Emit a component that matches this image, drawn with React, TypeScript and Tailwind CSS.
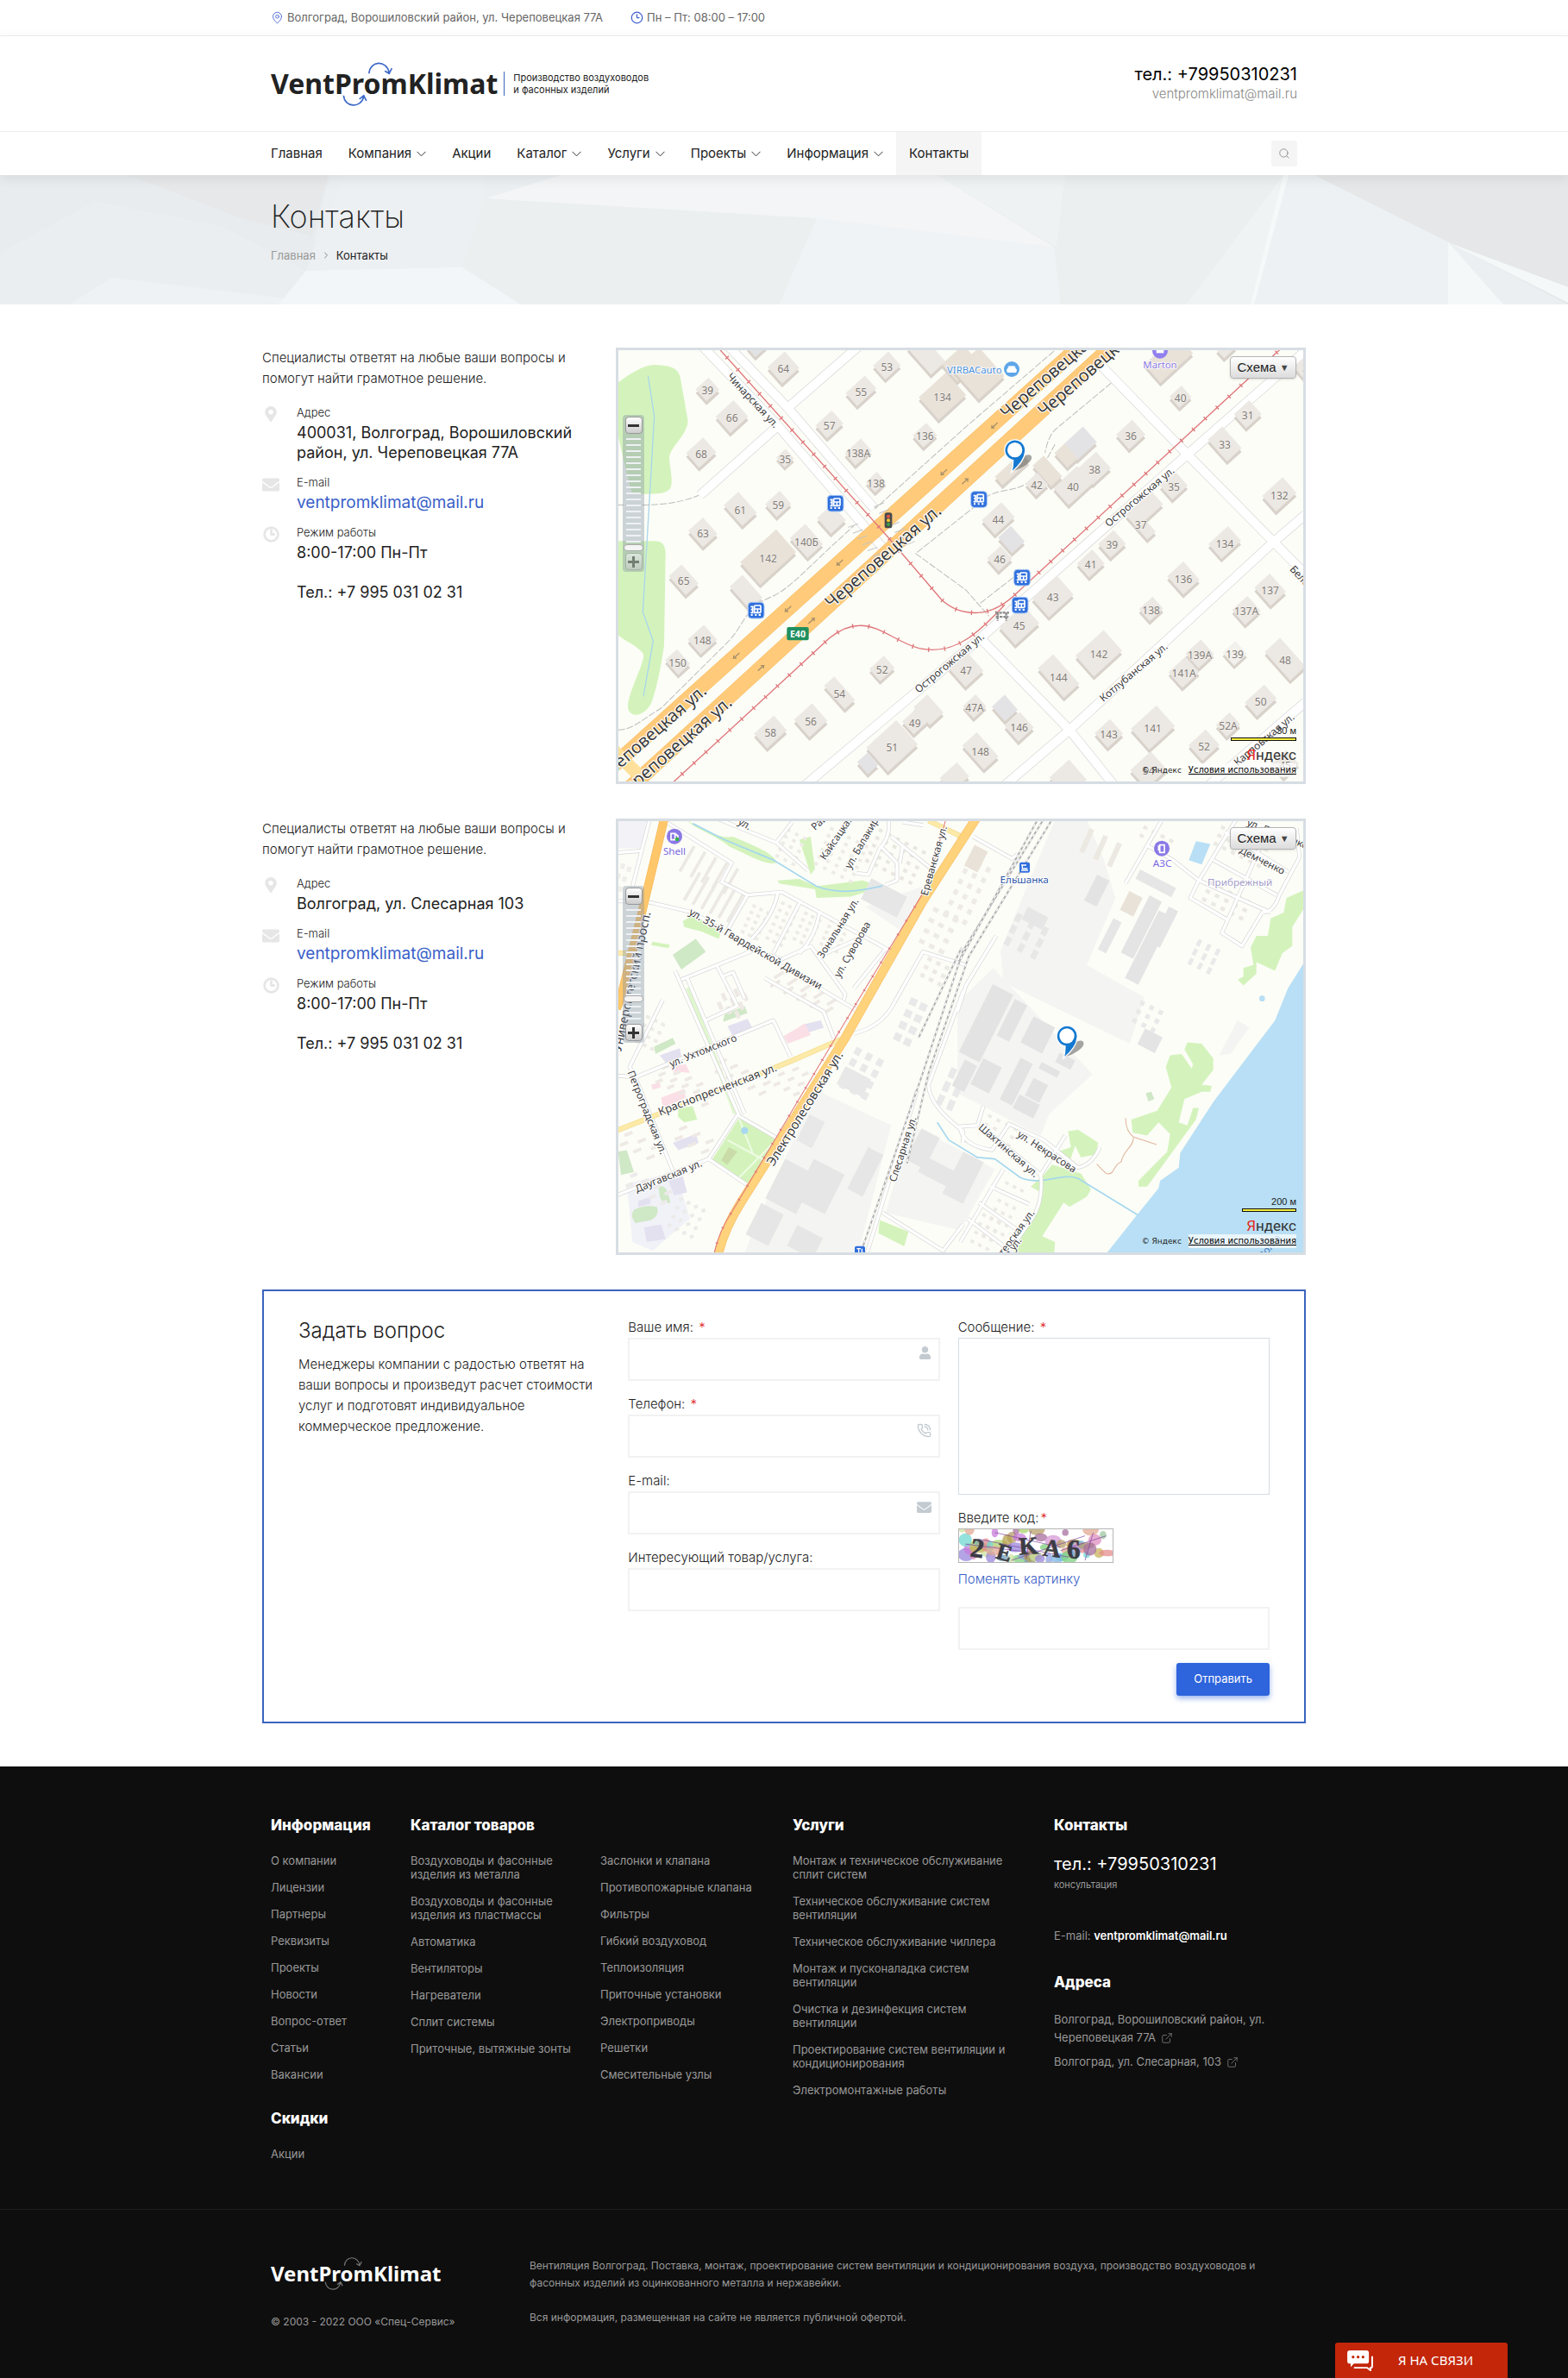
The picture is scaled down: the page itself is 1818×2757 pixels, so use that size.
import type { ReactNode } from "react";
import { FaEnvelope, FaMapMarkerAlt, FaUser } from "react-icons/fa";
import { ChevronRight, Clock3, ExternalLink, MapPin, PhoneCall, Search } from "lucide-react";

const navItems = [
  { title: "Главная" },
  { title: "Компания", hasMenu: true },
  { title: "Акции" },
  { title: "Каталог", hasMenu: true },
  { title: "Услуги", hasMenu: true },
  { title: "Проекты", hasMenu: true },
  { title: "Информация", hasMenu: true },
  { title: "Контакты", active: true },
];

const infoLinks = [
  "О компании",
  "Лицензии",
  "Партнеры",
  "Реквизиты",
  "Проекты",
  "Новости",
  "Вопрос-ответ",
  "Статьи",
  "Вакансии",
];

const catalogLinks = [
  "Воздуховоды и фасонные изделия из металла",
  "Воздуховоды и фасонные изделия из пластмассы",
  "Автоматика",
  "Вентиляторы",
  "Нагреватели",
  "Сплит системы",
  "Приточные, вытяжные зонты",
];

const catalogLinksMore = [
  "Заслонки и клапана",
  "Противопожарные клапана",
  "Фильтры",
  "Гибкий воздуховод",
  "Теплоизоляция",
  "Приточные установки",
  "Электроприводы",
  "Решетки",
  "Смесительные узлы",
];

const serviceLinks = [
  "Монтаж и техническое обслуживание сплит систем",
  "Техническое обслуживание систем вентиляции",
  "Техническое обслуживание чиллера",
  "Монтаж и пусконаладка систем вентиляции",
  "Очистка и дезинфекция систем вентиляции",
  "Проектирование систем вентиляции и кондиционирования",
  "Электромонтажные работы",
];

const K = 1.014;

type Label = [x: number, y: number, angle: number, text: string, size?: number, anchor?: "start" | "middle" | "end", fill?: string];
type Block = [x: number, y: number, a: number, b: number, label?: string, fill?: string];

const BEIGE = "#e9e2d8";
const STONE = "#ece8e3";
const SLATE = "#e3e3e5";

const streetBlocks: Block[] = [
  [625, 110, 40, 38, "64"],
  [361, 185, 30, 28, "39"],
  [446, 278, 42, 38, "66"],
  [339, 402, 40, 34, "68"],
  [631, 420, 22, 22, "35"],
  [532, 40, 26, 22, "", SLATE],
  [985, 103, 36, 32, "53"],
  [895, 190, 45, 30, "55"],
  [785, 305, 38, 30, "57"],
  [1178, 208, 64, 52, "134", BEIGE],
  [1122, 66, 34, 62],
  [1240, 95, 50, 40, "", BEIGE],
  [1117, 342, 32, 28, "136"],
  [885, 400, 38, 28, "138А"],
  [947, 503, 26, 24, "138"],
  [607, 578, 34, 30, "59"],
  [475, 595, 34, 48, "61"],
  [345, 675, 34, 38, "63"],
  [572, 760, 84, 52, "142", BEIGE],
  [705, 705, 36, 46, "140Б"],
  [792, 630, 35, 36],
  [495, 880, 30, 52],
  [278, 838, 30, 44, "65"],
  [343, 1043, 38, 34, "148"],
  [257, 1120, 28, 34, "150"],
  [580, 1360, 46, 34, "58"],
  [720, 1320, 42, 40, "56"],
  [820, 1226, 24, 54, "54"],
  [968, 1142, 34, 28, "52"],
  [1003, 1408, 70, 56, "51"],
  [918, 1468, 24, 28, "", SLATE],
  [1130, 1284, 32, 42],
  [1082, 1325, 32, 30, "49"],
  [1220, 1515, 40, 32],
  [1305, 130, 60, 66, "", BEIGE],
  [1965, 80, 76, 42, "", BEIGE],
  [2006, 210, 28, 26, "40"],
  [2165, 45, 28, 20],
  [2440, 108, 30, 28, "2"],
  [2240, 270, 36, 32, "31"],
  [2160, 372, 34, 50, "33"],
  [1833, 340, 38, 34, "36"],
  [1657, 370, 46, 36, "", SLATE],
  [1608, 412, 24, 34, "", BEIGE],
  [1707, 455, 42, 38, "38"],
  [1632, 515, 56, 40, "40"],
  [1543, 465, 26, 48, "", BEIGE],
  [1506, 510, 28, 28, "42"],
  [1420, 458, 62, 20, "", BEIGE],
  [1983, 515, 36, 32, "35"],
  [1888, 590, 50, 30],
  [1868, 645, 20, 56, "37"],
  [2350, 545, 48, 36, "132"],
  [1372, 628, 46, 34, "44"],
  [1418, 700, 30, 36, "", SLATE],
  [1377, 765, 32, 30, "46"],
  [1768, 715, 36, 32, "39"],
  [1694, 782, 36, 32, "41"],
  [2160, 710, 46, 34, "134"],
  [2016, 832, 38, 42, "136"],
  [1562, 895, 58, 44, "43"],
  [1445, 993, 56, 42, "45"],
  [1904, 938, 32, 28, "138"],
  [2318, 872, 36, 42, "137"],
  [2235, 943, 36, 34, "137А"],
  [2073, 1092, 36, 34, "139А"],
  [2195, 1090, 30, 30, "139", "#f3f1ed"],
  [2370, 1110, 36, 66, "48"],
  [1722, 1090, 66, 48, "142"],
  [1582, 1168, 36, 68, "144"],
  [2018, 1155, 40, 36, "141А"],
  [2285, 1252, 46, 32, "50"],
  [1260, 1145, 42, 44, "47"],
  [1290, 1272, 30, 28, "47А"],
  [1395, 1278, 30, 34, "", SLATE],
  [1445, 1342, 36, 36, "146"],
  [1310, 1425, 34, 56, "148"],
  [1757, 1365, 36, 34, "143"],
  [1910, 1345, 60, 48, "141"],
  [2172, 1335, 32, 28, "52А"],
  [2088, 1405, 40, 36, "52"],
  [1895, 1490, 48, 42, "54"],
  [1615, 1520, 46, 46],
  [2370, 1470, 36, 32, "45"],
];

const streetLabels: Label[] = [
  [510, 228, 47, "Чинарская ул.", 36, "middle"],
  [985, 770, -41, "Череповецкая ул.", 60, "middle"],
  [362, 1222, -41, "Череповецкая ул.", 60, "end"],
  [450, 1262, -41, "Череповецкая ул.", 60, "end"],
  [1402, 285, -41, "Череповецкая ул.", 60],
  [1532, 278, -41, "Череповецкая ул.", 60],
  [1872, 560, -40, "Острогожская ул.", 36, "middle"],
  [1095, 1225, -40, "Острогожская ул.", 36],
  [1738, 1255, -40, "Котлубанская ул.", 36],
  [2205, 1475, -40, "Карповская ул.", 36],
  [2384, 800, 47, "Белоглинская ул.", 36],
];

const cityLabels: Label[] = [
  [522, 485, 30, "ул. 35-й Гвардейской Дивизии", 36, "middle"],
  [350, 835, -22, "ул. Ухтомского", 35, "middle"],
  [400, 970, -21, "Краснопресненская ул.", 39, "middle"],
  [140, 1040, 68, "Петроградская ул.", 35, "middle"],
  [230, 1265, -22, "Даугавская ул.", 35, "middle"],
  [712, 1030, -58, "Электролесовская ул.", 44, "middle"],
  [1052, 1165, -72, "Слесарная ул.", 35, "middle"],
  [1160, 175, -74, "Ереванская ул.", 35, "middle"],
  [770, 172, -56, "Кайсацкая ул.", 35],
  [858, 202, -60, "ул. Балакирева", 35],
  [735, 70, -42, "Район", 35],
  [465, 45, 30, "ул.", 35],
  [825, 410, -58, "Зональная ул.", 35, "middle"],
  [875, 482, -60, "ул. Суворова", 35, "middle"],
  [112, 590, -78, "Университетский просп.", 42, "middle"],
  [1400, 1175, 41, "Шахтинская ул.", 35, "middle"],
  [1535, 1180, 33, "ул. Некрасова", 35, "middle"],
  [1500, 1380, -54, "Монтерская ул.", 35, "end"],
  [1455, 1475, -54, "вая ул.", 35, "end"],
  [2235, 50, 22, "ул. Демченко", 35],
  [2285, 182, 27, "Демченко", 35, "middle"],
];

function MapLabels({ labels }: { labels: Label[] }) {
  return (
    <g fontFamily="'Noto Sans', 'Open Sans', sans-serif" stroke="#fff" strokeWidth="7" paintOrder="stroke" strokeLinejoin="round">
      {labels.map(([x, y, angle, text, size = 36, anchor = "start", fill = "#3c3c3c"], i) => (
        <text key={i} transform={`translate(${x} ${y * K}) rotate(${angle})`} fontSize={size} textAnchor={anchor} fill={fill}>
          {text}
        </text>
      ))}
    </g>
  );
}

function Streets({ paths, width, color = "#fff", casing = "#d6d6d6" }: { paths: string[]; width: number; color?: string; casing?: string }) {
  return (
    <g fill="none" strokeLinejoin="round">
      {paths.map((d) => (
        <path key={d} d={d} stroke={casing} strokeWidth={width + 4} />
      ))}
      {paths.map((d) => (
        <path key={d} d={d} stroke={color} strokeWidth={width} />
      ))}
    </g>
  );
}

function Tram({ d, thin }: { d: string; thin?: boolean }) {
  return (
    <g fill="none" stroke="#e0767a">
      <path d={d} strokeWidth={thin ? 3 : 4} />
      <path d={d} strokeWidth={thin ? 9 : 16} strokeDasharray="4 52" />
    </g>
  );
}

function StopIcon({ x, y }: { x: number; y: number }) {
  return (
    <g transform={`translate(${x} ${y})`}>
      <rect x="-28" y="-28" width="56" height="56" rx="12" fill="#2f6fdc" stroke="#a9c8f5" strokeWidth="3" />
      <path d="M16 -17H-6M16 -17V8M-6 -17V8H16M-6 -5H16M5 -5V8M-19 -13H-12V8H-19M-18 -3h6" fill="none" stroke="#fff" strokeWidth="5" />
      <path d="M-18 16h6M-4 16h6M9 16h7" stroke="#fff" strokeWidth="6" />
    </g>
  );
}

function Pin({ x, y }: { x: number; y: number }) {
  return (
    <g transform={`translate(${x} ${y})`}>
      <path d="M-5 72 C10 40 30 10 54 18 C70 30 40 60 -5 72Z" fill="#000" opacity=".35" />
      <path d="M-12 78 C-6 60 -6 46 -6 36 A36 36 0 1 1 36 6 C34 34 12 58 -12 78Z" fill="#1478d0" stroke="#fff" strokeWidth="4" />
      <circle cx="0" cy="0" r="26" fill="#fff" />
    </g>
  );
}

function StreetMap() {
  return (
    <svg viewBox="51 48 2382 1500" preserveAspectRatio="xMidYMid slice" className="block h-[500px] w-full bg-[#fcfdf7]" role="img" aria-label="Карта: ул. Череповецкая 77А">
      <g transform={`scale(1 ${K})`}>
        <path d="M40 165 C90 130 140 95 180 98 C230 100 262 105 268 150 L293 290 C290 340 230 380 228 415 C228 440 240 480 235 510 C232 535 200 540 160 541 L100 541 C80 480 60 380 40 300Z" fill="#d4f3bc" />
        <path d="M40 702 H180 Q215 702 215 745 L210 1060 C200 1130 185 1200 170 1245 C160 1280 130 1300 108 1298 C80 1290 80 1270 90 1235 C110 1170 150 1100 135 1085 C110 1055 60 1040 40 1015Z" fill="#d4f3bc" />
        <path d="M154 135 L176 275 L136 945 L172 1045 L138 1235" fill="none" stroke="#a9d6ec" strokeWidth="4" />
        <g fill="none" stroke="#bdbdbd" strokeWidth="3" strokeDasharray="24 6">
          <path d="M45 578 C150 580 250 580 330 545" />
          <path d="M50 1350 C100 1350 140 1310 200 1275 L430 1050 C490 990 490 930 580 895 C650 865 700 800 870 650" />
          <path d="M650 235 L945 590 L1260 310 L1570 47" />
          <path d="M1570 370 L1530 440 L1490 490 C1450 530 1400 520 1340 545 L1085 745 L1260 870 L1340 960" />
          <path d="M1765 160 L1570 320 Q1545 345 1535 400" />
          <path d="M1310 915 L1460 800" />
        </g>
        <Streets
          width={30}
          paths={[
            "M340 30 L600 300 L970 725",
            "M430 30 L640 245 L940 590",
            "M335 545 L600 312",
            "M640 245 L885 35",
            "M700 1540 L1310 1035 L2030 405 L2440 50",
            "M1720 90 L2030 405 L2330 705 L2440 815",
            "M1310 1035 L1620 1350 L1775 1540",
            "M1395 1540 L1620 1350 L2330 705 L2440 612",
            "M2105 1540 L2440 1255",
          ]}
        />
        <Streets width={48} color="#ffcb7b" casing="#fbc06a" paths={["M30 1476 L1660 30", "M70 1567 L1775 27"]} />
        <path d="M50 1405 L150 1500 L110 1525 L45 1460Z" fill="#ffe09a" />
        <g fill="none" stroke="#c4c4c4" strokeWidth="3">
          {[0, 1, 2, 3, 4, 5, 6].map((i) => (
            <path key={i} d={`M${850 + i * 17} ${655 + i * 20}l34 -12M${940 + i * 18} ${585 + i * 22}l34 -14`} />
          ))}
        </g>
        <g stroke="#a89068" fill="none" strokeWidth="4">
          {["M472 1086l-20 18h10m-10 0v-10", "M652 925l-20 18h10m-10 0v-10", "M832 766l-20 18h10m-10 0v-10", "M1194 456l-20 18h10m-10 0v-10", "M1370 296l-20 18h10m-10 0v-10", "M536 1147l20 -18h-10m10 0v10", "M712 985l20 -18h-10m10 0v10", "M1246 507l20 -18h-10m10 0v10"].map((d) => (
            <path key={d} d={d} />
          ))}
        </g>
        {streetBlocks.map(([x, y, a, b, , fill = STONE], i) => (
          <g key={i}>
            <g transform={`translate(${x} ${y + 10}) rotate(-42)`}>
              <rect x={-a} y={-b} width={a * 2} height={b * 2} fill="#d8d2cb" />
            </g>
            <g transform={`translate(${x} ${y - 3}) rotate(-42)`}>
              <rect x={-a} y={-b} width={a * 2} height={b * 2} fill={fill} />
            </g>
          </g>
        ))}
        <Tram d="M390 30 L990 690 L1175 903 Q1225 950 1300 948 Q1370 945 1440 877 L2365 33" />
        <Tram d="M230 1540 L785 1035 Q840 992 890 992 C960 990 1020 1050 1097 1070 C1170 1085 1220 1065 1260 1040 Q1310 1010 1395 920" />
        <path d="M1362 948h48M1370 948v28M1400 948v28M1364 962h44" stroke="#8b8b8b" strokeWidth="7" strokeDasharray="10 3" fill="none" />
      </g>
      <g fontFamily="'Noto Sans', 'Open Sans', sans-serif" fontSize="36" textAnchor="middle" fill="#7f7b77" stroke="#f6f3ef" strokeWidth="3" paintOrder="stroke">
        {streetBlocks.map(([x, y, , , label], i) =>
          label ? (
            <text key={i} x={x} y={(y + 14) * K}>
              {label}
            </text>
          ) : null,
        )}
      </g>
      <MapLabels labels={streetLabels} />
      <StopIcon x={806} y={581} />
      <StopIcon x={530} y={953} />
      <StopIcon x={1305} y={567} />
      <StopIcon x={1455} y={839} />
      <StopIcon x={1448} y={935} />
      <rect x="637" y="1011" width="76" height="46" rx="6" fill="#1f8f5f" />
      <text x="675" y="1046" textAnchor="middle" fontFamily="'Noto Sans', sans-serif" fontWeight="700" fontSize="32" fill="#fff">
        E40
      </text>
      <rect x="977" y="613" width="26" height="54" rx="8" fill="#4a4a4a" />
      <circle cx="990" cy="626" r="6" fill="#e2554c" />
      <circle cx="990" cy="640" r="6" fill="#f0c62f" />
      <circle cx="990" cy="654" r="6" fill="#39a548" />
      <g fontFamily="'Noto Sans', sans-serif" fontSize="34" stroke="#fff" strokeWidth="5" paintOrder="stroke">
        <text x="1194" y="128" fill="#4a8fd9">
          VIRBACauto
        </text>
        <text x="1935" y="111" textAnchor="middle" fill="#8a78e0">
          Marton
        </text>
      </g>
      <circle cx="1419" cy="114" r="27" fill="#5ea6e8" />
      <path d="M1405 126v-12l4 -10h20l4 10v12M1403 114h32v9h-32z" fill="#fff" stroke="#fff" strokeWidth="2" />
      <circle cx="1935" cy="50" r="27" fill="#9180ee" />
      <path d="M1922 44h26v14h-26z" fill="#fff" />
      <Pin x={1430} y={395} />
    </svg>
  );
}

// Rows of small slanted buildings: x, y, columns, rows, step x, step y, width, height, angle, fill
const rows: [number, number, number, number, number, number, number, number, number, string][] = [
  [310, 120, 5, 1, 38, 26, 11, 100, 30, "#ece9e4"],
  [330, 210, 6, 1, 30, 16, 11, 110, 30, "#ece9e4"],
  [520, 320, 3, 5, 24, 22, 13, 11, 28, "#eeebe6"],
  [620, 310, 3, 6, 24, 24, 13, 11, 28, "#eeebe6"],
  [700, 345, 3, 5, 24, 22, 13, 11, 28, "#eeebe6"],
  [790, 370, 3, 5, 26, 20, 13, 11, 28, "#eeebe6"],
  [640, 60, 3, 5, 28, 22, 13, 11, 28, "#eeebe6"],
  [790, 55, 5, 6, 30, 24, 13, 11, 28, "#eeebe6"],
  [960, 60, 6, 5, 30, 26, 14, 12, 28, "#eae7e1"],
  [1150, 330, 3, 4, 34, 36, 20, 15, 28, "#eeebe7"],
  [1270, 160, 3, 6, 32, 36, 16, 18, 28, "#eeebe7"],
  [60, 180, 2, 6, 22, 34, 16, 18, 14, "#f0eeea"],
  [150, 700, 3, 4, 26, 28, 14, 12, 24, "#eeebe7"],
  [200, 880, 5, 3, 40, 24, 26, 11, -22, "#eee9e4"],
  [260, 1090, 3, 2, 46, 34, 30, 11, -22, "#eee9e4"],
  [70, 1110, 3, 2, 46, 34, 30, 11, -22, "#eee9e4"],
  [400, 860, 5, 2, 38, 34, 28, 11, -24, "#eee9e4"],
  [590, 570, 5, 2, 46, 30, 40, 11, -32, "#eee9e4"],
  [420, 600, 3, 3, 30, 30, 14, 28, -24, "#eee9e4"],
  [620, 870, 3, 3, 34, 34, 24, 11, -24, "#eee9e4"],
  [90, 1250, 4, 2, 40, 34, 26, 12, -22, "#edebea"],
  [260, 1330, 4, 4, 26, 30, 14, 12, -22, "#edebea"],
  [880, 810, 3, 4, 38, 38, 22, 26, 28, "#e9e9e9"],
  [1070, 640, 2, 4, 34, 40, 26, 26, 24, "#e9e9e9"],
  [1130, 500, 3, 3, 30, 28, 16, 14, 28, "#edeae6"],
  [1210, 880, 2, 3, 36, 46, 22, 36, 24, "#e9e9e9"],
  [1340, 1040, 4, 3, 30, 28, 14, 11, 32, "#edeae6"],
  [1400, 1270, 3, 7, 26, 30, 13, 11, 32, "#edeae6"],
  [1320, 1380, 3, 4, 26, 30, 13, 11, 32, "#edeae6"],
  [1880, 50, 4, 2, 30, 28, 15, 12, 28, "#ece9e4"],
  [2150, 50, 6, 3, 30, 28, 15, 12, 28, "#ece9e4"],
  [2110, 240, 5, 3, 32, 28, 16, 13, 28, "#ece9e4"],
  [2070, 440, 3, 3, 32, 32, 14, 24, 28, "#e9e9e9"],
  [1870, 650, 3, 3, 32, 30, 16, 16, 28, "#e9e9e9"],
  [1690, 60, 3, 2, 48, 40, 18, 44, 24, "#ece8e2"],
  [1440, 350, 3, 3, 46, 40, 20, 30, 28, "#e7e7e7"],
];

const works: Block[] = [
  [975, 300, 70, 40, "", "#e6e6e7"],
  [870, 930, 50, 34, "", "#e8e8e8"],
  [650, 1290, 60, 76, "", "#e6e6e6"],
  [750, 1290, 60, 76, "", "#e6e6e6"],
  [560, 1420, 44, 60, "", "#e6e6e6"],
  [700, 1480, 50, 40, "", "#e6e6e6"],
  [910, 1240, 30, 80, "", "#e6e6e6"],
  [1110, 1160, 36, 60, "", "#e6e6e6"],
  [1160, 1240, 60, 30, "", "#e6e6e6"],
  [720, 1100, 30, 50, "", "#e8e8e8"],
  [1330, 730, 40, 130, "", "#e3e3e4"],
  [1420, 720, 24, 70, "", "#e3e3e4"],
  [1510, 770, 42, 50, "", "#e3e3e4"],
  [1255, 910, 24, 50, "", "#e3e3e4"],
  [1330, 910, 36, 50, "", "#e3e3e4"],
  [1435, 930, 24, 80, "", "#e3e3e4"],
  [1505, 960, 28, 34, "", "#e3e3e4"],
  [1470, 1015, 40, 26, "", "#e3e3e4"],
  [1605, 860, 30, 18, "", "#e3e3e4"],
  [1550, 890, 36, 12, "", "#e3e3e4"],
  [1715, 275, 24, 50, "", "#e3e3e4"],
  [1500, 370, 40, 24, "", "#e6e6e6"],
  [1870, 400, 24, 110, "", "#e4e4e5"],
  [1895, 470, 26, 130, "", "#e4e4e5"],
  [1950, 400, 18, 70, "", "#e4e4e5"],
  [1760, 430, 16, 60, "", "#e6e6e6"],
  [1920, 250, 70, 18, "", "#e6e6e6"],
  [1835, 320, 26, 36, "", BEIGE],
  [1295, 165, 26, 40, "", BEIGE],
  [1900, 790, 34, 30, "", "#e4e4e5"],
  [1250, 1260, 40, 80, "", "#e6e6e6"],
];

function CityMap() {
  return (
    <svg viewBox="51 37 2382 1500" preserveAspectRatio="xMidYMid slice" className="block h-[500px] w-full bg-[#fcfdf7]" role="img" aria-label="Карта: ул. Слесарная, 103">
      <g transform={`scale(1 ${K})`}>
        <g fill="#f4f4f2">
          <path d="M1355 540 L1700 905 L1550 1040 L1520 1115 L1230 970 L1230 660Z" />
          <path d="M1570 30 L1680 30 L1740 170 L1780 300 L1680 530 L1880 640 L1830 800 L1390 590 L1380 480Z" />
          <path d="M740 960 L1000 1080 L880 1540 L480 1540 L600 1260Z" />
          <path d="M1070 1080 L1230 1160 L1360 1230 L1240 1440 L980 1380Z" />
          <path d="M910 330 L1110 260 L1090 350 L1030 410Z" />
          <path d="M45 30 H160 L130 130 H45Z" fill="#f3f3f7" />
          <path d="M80 1280 L250 1240 L300 1400 L170 1510 L100 1480Z" fill="#f1f1f8" />
          <path d="M2140 840 L2205 720 L2245 745 L2180 835Z" />
        </g>
        <g fill="#d4f3bc">
          <path d="M290 35 C380 80 400 95 450 90 C520 120 600 150 600 180 C560 190 480 140 440 125 C380 80 330 70 290 35Z" />
          <path d="M605 240 L680 235 L740 260 L900 240 L970 262 L860 295 L740 300 L735 270 L610 250Z" />
          <path d="M680 100 L720 90 L725 130 L735 200 L720 220 L700 160Z" />
          <path d="M275 380 L310 360 L410 410 L400 440 L340 415 L280 400Z" />
          <path d="M170 450 L230 460 L225 472 L165 462Z" />
          <path d="M470 1055 L605 1125 L500 1280 L375 1200Z" />
          <path d="M285 610 L300 605 L470 1040 L450 1040Z" opacity=".7" />
          <path d="M260 1020 L310 1015 L325 1060 L280 1070 L258 1050Z" />
          <path d="M960 1405 L1060 1445 L1045 1495 L955 1450Z" />
          <path d="M2433 275 L2375 300 L2365 350 L2320 370 L2310 430 L2270 430 L2250 470 L2260 530 L2225 540 L2225 570 L2205 580 L2225 600 L2270 560 L2270 520 L2335 550 L2360 490 L2395 465 L2395 400 L2433 340Z" />
          <path d="M2030 795 L2080 800 L2120 850 L2120 890 L2080 940 L2115 945 L2110 965 L2080 965 L2020 990 L2000 1070 L2030 1080 L2050 1020 L2070 1020 L2060 1060 L1890 1290 L1860 1290 L1860 1270 L1960 1170 L1970 1110 L1930 1070 L1890 1115 L1840 1105 L1835 1060 L1925 1030 L1975 950 L1955 880 L1970 840 L2010 835 L2045 885 L2050 870 L2020 820Z" />
          <path d="M1615 1100 L1650 1095 L1720 1140 L1710 1180 L1660 1190 L1640 1150 L1620 1205 L1580 1170 L1625 1155Z" />
          <path d="M1560 1215 L1660 1245 L1695 1300 L1680 1325 L1620 1360 L1600 1345 L1525 1460 L1570 1480 L1565 1540 L1410 1540 L1500 1380 L1520 1310 L1485 1290 L1530 1250Z" />
        </g>
        <g fill="#cfe8c6">
          <path d="M240 495 L320 440 L355 485 L270 545Z" />
          <path d="M420 700 L490 670 L500 695 L415 725Z" />
          <path d="M175 810 L240 780 L250 800 L180 835Z" />
          <path d="M50 1170 L80 1165 L105 1240 L60 1250Z" />
          <path d="M105 1370 Q140 1350 185 1360 Q195 1390 165 1405 L110 1415 Q90 1390 105 1370Z" />
          <path d="M190 1290 Q215 1280 225 1320 L232 1345 Q205 1355 195 1325Z" />
          <path d="M1885 970 L1905 965 L1915 990 L1895 998Z" />
        </g>
        <g fill="#e3e0f0">
          <path d="M430 740 L500 715 L520 750 L450 775Z" />
          <path d="M690 735 L755 720 L765 745 L700 765Z" />
          <path d="M195 840 L265 815 L270 845 L215 865Z" />
          <path d="M225 1270 L275 1255 L290 1310 L245 1320Z" />
          <path d="M240 1140 L320 1110 L330 1140 L260 1165Z" />
          <path d="M120 1340 L165 1325 L160 1350 L120 1360Z" />
          <path d="M140 1430 L200 1420 L215 1470 L150 1480Z" />
        </g>
        <g fill="#fbdfe6">
          <path d="M625 775 L700 730 L720 770 L640 800Z" />
          <path d="M200 985 L280 955 L285 985 L205 1020Z" />
          <path d="M165 940 L195 932 L198 950 L170 958Z" />
          <path d="M230 880 L285 870 L300 900 L240 895Z" />
        </g>
        {rows.map(([x, y, cols, lines, dx, dy, w, h, angle, fill], r) =>
          Array.from({ length: cols * lines }, (_, i) => {
            const c = i % cols;
            const l = Math.floor(i / cols);
            return (
              <rect
                key={`${r}-${i}`}
                width={w}
                height={h}
                fill={fill}
                transform={`translate(${x + c * dx - l * dy * 0.45} ${y + l * dy + c * dx * 0.5}) rotate(${angle})`}
              />
            );
          }),
        )}
        {works.map(([x, y, a, b, , fill], i) => (
          <rect key={i} x={-a} y={-b} width={a * 2} height={b * 2} fill={fill} transform={`translate(${x} ${y}) rotate(27)`} />
        ))}
        <path d="M435 1155 L465 1170 L430 1215 L408 1200Z" fill="#c9dca8" />
        <path d="M430 1130 L560 1200M470 1055 L520 1180M605 1125 L470 1260" stroke="#eefbe4" strokeWidth="6" fill="none" />
        <path d="M2440 515 L2380 610 L2335 720 L2120 1000 L2005 1175 L2000 1225 L1935 1270 L1930 1295 L1855 1387 L1740 1530 H2440Z" fill="#b8dff5" />
        <path d="M2060 105 L2110 115 L2080 185 L2035 170Z" fill="#b8dff5" />
        <circle cx="2290" cy="645" r="10" fill="#b8dff5" />
        <circle cx="490" cy="1098" r="12" fill="#a8d8f0" />
        <g fill="none" stroke="#a5d7ee" strokeWidth="5">
          <path d="M310 45 L420 100 L590 170 L740 260 Q830 295 970 258" />
          <path d="M1160 1070 L1200 1130 L1300 1190 L1360 1195 L1450 1260 C1530 1290 1590 1240 1650 1262 L1857 1387" />
        </g>
        <path d="M1815 1055 Q1815 1100 1843 1120 L1923 1146M1843 1120 C1840 1160 1810 1160 1800 1205 C1770 1215 1780 1250 1750 1246 Q1740 1240 1715 1213" fill="none" stroke="#e0b49c" strokeWidth="3" />
        <Streets
          width={10}
          paths={[
            "M210 35 L445 180 L410 245 L500 290 L620 280 L985 475",
            "M45 145 L130 138",
            "M160 30 L100 260",
            "M45 310 L160 315 L310 350 L880 685",
            "M500 290 L430 410",
            "M605 285 Q590 360 515 440",
            "M685 310 L590 490",
            "M750 345 Q740 430 680 490",
            "M270 580 L520 480 L620 510 L720 465 L840 630 L835 650",
            "M248 550 L470 1045",
            "M290 575 L490 1040",
            "M395 535 L465 670 L355 720",
            "M410 570 L450 555 L490 645",
            "M560 575 L765 690 L800 780",
            "M45 910 L110 915 L590 720 L650 845",
            "M205 650 L90 880 L110 915 L240 1235",
            "M45 1320 L365 1195 L500 1285",
            "M365 1195 L465 1045 L605 1125",
            "M980 475 L870 610",
            "M885 440 L750 500",
            "M870 765 Q970 740 1010 660 L1110 485 L1260 530",
            "M1110 50 L1040 40",
            "M400 30 L600 110 L655 40",
            "M600 110 L710 205",
            "M990 30 Q1000 90 960 130 L920 220 L880 215",
            "M960 120 L1020 180 L1020 240 L980 255",
            "M1000 90 L1140 200",
            "M1040 120 L1030 180",
            "M1130 260 L1080 345",
            "M1130 940 Q1130 1010 1250 1100 L1250 1140",
            "M1285 90 L1420 165 L1440 150",
            "M1230 690 L1260 600 L1365 430",
            "M1130 940 L1250 620",
            "M1090 960 L915 1520",
            "M970 1380 L1180 1510 L1250 1420",
            "M1230 1085 L1300 1080 L1320 1015",
            "M1240 1090 Q1250 1150 1350 1165 L1410 1075 L1530 1130 L1650 1225 Q1700 1215 1725 1155",
            "M1310 1080 L1520 1250 L1605 1115",
            "M1520 1250 Q1530 1340 1490 1400 L1390 1540",
            "M1390 1230 L1240 1480",
            "M1345 1290 L1480 1350",
            "M1305 1345 L1440 1440",
            "M1265 1400 L1400 1500",
            "M1940 35 L1815 250",
            "M1890 120 L1980 170 L2070 240 L2320 350",
            "M2200 30 L2070 240 L2040 300 L2170 375",
            "M2160 75 L2380 210",
            "M2120 170 L2340 290",
            "M2300 90 L2150 420 L2220 465 L2290 350 Q2330 350 2350 290 L2420 160 L2410 60",
          ]}
        />
        <Streets width={14} color="#fdeaa8" casing="#f3dc8e" paths={["M45 1098 L220 1030 L650 860 L825 785", "M1130 35 L1250 92", "M1230 85 L1260 97", "M45 488 L90 490"]} />
        <Streets width={26} color="#ffc76a" casing="#f5b95a" paths={["M210 30 L135 340 L60 640 L45 680"]} />
        <Streets width={28} color="#ffd27c" casing="#f5c168" paths={["M395 1540 Q410 1450 480 1340 L840 780 L1110 310 L1300 20"]} />
        <g fill="none">
          {["M1245 470 L1095 780", "M1530 30 L1250 480 L1110 900 L900 1500", "M1560 30 L1270 500 L1130 900 L1055 1210", "M1510 30 L1235 520"].map((d) => (
            <g key={d}>
              <path d={d} stroke="#b0b0b0" strokeWidth="6" />
              <path d={d} stroke="#fff" strokeWidth="4" strokeDasharray="10 10" />
            </g>
          ))}
        </g>
        <Tram thin d="M380 1540 Q395 1450 450 1370 L815 765 L1125 260 L1190 30" />
      </g>
      <MapLabels labels={cityLabels} />
      <circle cx="246" cy="90" r="27" fill="#8a78e6" />
      <path d="M234 80h14v22h-14zM250 82l8 6v14" fill="none" stroke="#fff" strokeWidth="5" />
      <circle cx="255" cy="100" r="7" fill="#35b44a" />
      <circle cx="1941" cy="132" r="27" fill="#8a78e6" />
      <path d="M1934 120h16v26h-16zM1930 122v18" fill="none" stroke="#fff" strokeWidth="5" />
      <rect x="1446" y="180" width="36" height="36" rx="6" fill="#2f6fdc" />
      <path d="M1452 190h18M1456 190v12h18M1452 208h24" fill="none" stroke="#fff" strokeWidth="4" />
      <rect x="873" y="1515" width="36" height="30" rx="6" fill="#2f6fdc" />
      <path d="M880 1524h14M887 1524v14M898 1524v14h8" fill="none" stroke="#fff" strokeWidth="4" />
      <g fontFamily="'Noto Sans', sans-serif" fontSize="35" textAnchor="middle" stroke="#fff" strokeWidth="6" paintOrder="stroke">
        <text x="246" y="154" fill="#7a68dc">
          Shell
        </text>
        <text x="1943" y="195" fill="#7a68dc">
          АЗС
        </text>
        <text x="1463" y="252" fill="#2c56a8">
          Ельшанка
        </text>
        <text x="2213" y="261" fill="#a5a0c8">
          Прибрежный
        </text>
        <text transform="translate(2325 1525) rotate(-50)" fill="#4a7fc0" stroke="none">
          Волга
        </text>
      </g>
      <Pin x={1611} y={784} />
    </svg>
  );
}

interface MapFrameProps {
  children: ReactNode;
  scale: string;
  compact?: boolean;
}

function MapFrame({ children, scale, compact }: MapFrameProps) {
  return (
    <div className="relative overflow-hidden border-[3px] border-[#d7dde3]">
      {children}
      <button
        type="button"
        className="absolute top-[7px] right-2 flex h-[26px] w-[77px] items-center justify-center gap-1 rounded-sm border border-[#b5b5b5] bg-linear-to-b from-white to-[#dcdcdc] font-['Liberation_Sans',sans-serif] text-[15px] text-[#222] shadow-sm"
      >
        Схема <span className="text-[11px] text-[#444]">▼</span>
      </button>
      <div className="absolute top-[75px] left-[5px] flex h-[182px] w-[25px] flex-col items-center justify-between rounded-sm bg-[#8593a5]/40 p-0.5">
        <button type="button" aria-label="Уменьшить" className="flex size-5 items-center justify-center rounded-sm border border-[#999] bg-linear-to-b from-white to-[#ccc]">
          <span className="h-[3px] w-[13px] bg-[#333]" />
        </button>
        <div className="relative w-[17px] flex-1 bg-[repeating-linear-gradient(to_bottom,transparent_0px,transparent_5px,#eef1f4_5px,#eef1f4_7px)]">
          <span
            className={
              compact
                ? "absolute top-[105px] -left-[3px] h-2 w-[23px] rounded-sm border border-[#aaa] bg-[#f4f4f4]"
                : "absolute top-[128px] -left-[3px] h-2 w-[23px] rounded-sm border border-[#aaa] bg-[#f4f4f4]"
            }
          />
        </div>
        <button
          type="button"
          aria-label="Увеличить"
          className={
            compact
              ? "relative flex size-5 items-center justify-center rounded-sm border border-[#999] bg-linear-to-b from-white to-[#ccc]"
              : "relative flex size-5 items-center justify-center rounded-sm border border-[#999] bg-linear-to-b from-white to-[#ccc] opacity-50"
          }
        >
          <span className="absolute h-[3px] w-[13px] bg-[#333]" />
          <span className="absolute h-[13px] w-[3px] bg-[#333]" />
        </button>
      </div>
      <div className="absolute right-2 bottom-[5px] flex flex-col items-end font-['DejaVu_Sans',sans-serif] text-[9px] text-[#222]">
        <span className="font-['Liberation_Sans',sans-serif] text-[11px] leading-4">{scale}</span>
        <span className={compact ? "h-1 w-[63px] border border-[#111] bg-[#f6ee3a]" : "h-1 w-[76px] border border-[#111] bg-[#f6ee3a]"} />
        <span className="mt-1.5 font-[Roboto,sans-serif] text-[17px] leading-5 text-[#333]">
          <span className="text-[#e52620]">Я</span>ндекс
        </span>
        <span className="flex gap-2 leading-4">
          <span>© Яндекс</span>
          <a href="#terms" className="bg-white/70 text-[10px] text-black underline">
            Условия использования
          </a>
        </span>
      </div>
    </div>
  );
}

interface OfficeProps {
  address: string;
  children: ReactNode;
}

function Office({ address, children }: OfficeProps) {
  return (
    <section className="grid grid-cols-[390px_1fr] gap-5">
      <div>
        <p className="text-[15px] leading-6 font-light">Специалисты ответят на любые ваши вопросы и помогут найти грамотное решение.</p>
        <dl className="mt-4 grid grid-cols-[20px_1fr] gap-x-5 gap-y-3 text-[18px] leading-[23px]">
          <FaMapMarkerAlt className="mt-1 justify-self-center text-[18px] text-[#e6e6e6]" />
          <div>
            <dt className="mb-px text-[13px] leading-[22px] font-light">Адрес</dt>
            <dd>{address}</dd>
          </div>
          <FaEnvelope className="mt-1 text-[20px] text-[#e6e6e6]" />
          <div>
            <dt className="mb-px text-[13px] leading-[22px] font-light">E-mail</dt>
            <dd>
              <a href="mailto:ventpromklimat@mail.ru" className="text-[19px] text-[#3a5fc8]">
                ventpromklimat@mail.ru
              </a>
            </dd>
          </div>
          <Clock3 className="mt-1 size-[19px] justify-self-center text-[#e6e6e6]" strokeWidth={3.5} />
          <div>
            <dt className="mb-px text-[13px] leading-[22px] font-light">Режим работы</dt>
            <dd>8:00-17:00 Пн-Пт</dd>
            <dd className="mt-[23px]">Тел.: +7 995 031 02 31</dd>
          </div>
        </dl>
      </div>
      {children}
    </section>
  );
}

interface FieldProps {
  id: string;
  label: string;
  type?: string;
  required?: boolean;
  icon?: ReactNode;
}

function Field({ id, label, type = "text", required, icon }: FieldProps) {
  return (
    <div>
      <label htmlFor={id} className="block leading-6">
        {label} {required && <span className="ml-0.5 text-[#d22]">*</span>}
      </label>
      <div className="relative">
        <input id={id} type={type} className="block h-[50px] w-full border-2 border-[#f2f2f2] bg-white px-3 pr-9" />
        {icon && <span className="pointer-events-none absolute top-2.5 right-2.5 text-[#c3cbd1]">{icon}</span>}
      </div>
    </div>
  );
}

function Captcha() {
  const blobs = [
    "#cfe3a2", "#b79f6a", "#6fd8d2", "#9a86dc", "#a76f9e", "#e2a893", "#c77bd9", "#7fd07f", "#e08fc0",
    "#a9d46e", "#8fa2e0", "#c9b45c", "#6f9fb8", "#d59ad5", "#9fc7a0", "#b7a24e", "#7fb4e6", "#e58c8c",
  ];
  return (
    <svg viewBox="0 0 180 40" className="block h-10 w-[180px] border border-[#b5b5b5]" role="img" aria-label="Код с картинки">
      <rect width="180" height="40" fill="#fff" />
      {Array.from({ length: 60 }, (_, i) => (
        <ellipse key={i} cx={(i * 61) % 178} cy={(i * i * 7 + i * 3) % 41} rx={4 + (i % 4) * 2} ry={4 + ((i * 3) % 5)} fill={blobs[i % blobs.length]} opacity=".75" />
      ))}
      <g stroke="#7a3fa0" strokeWidth=".7">
        <path d="M20 12L130 34M4 18L96 30M40 4L120 22M60 38L150 8M84 2L78 36M150 38L160 4M176 8L120 26" fill="none" />
      </g>
      <g fontFamily="'Liberation Serif', serif" fontWeight="700" fontSize="33" fill="#3c3c44" stroke="#3c3c44" strokeWidth=".6">
        <text transform="translate(9 33) rotate(8)">2</text>
        <text transform="translate(40 35) rotate(16)" fontSize="28">E</text>
        <text transform="translate(70 31) rotate(-4)" fontSize="30">K</text>
        <text transform="translate(98 32) rotate(6)" fontSize="30">A</text>
        <text transform="translate(128 36)">6</text>
      </g>
    </svg>
  );
}

function QuestionForm() {
  return (
    <form className="grid grid-cols-3 gap-x-[21px] border-2 border-[#3a64bd] px-10 py-[30px] text-[15px] font-light" onSubmit={(e) => e.preventDefault()}>
      <div className="pr-3">
        <h2 className="text-[24px] leading-8">Задать вопрос</h2>
        <p className="mt-[11px] leading-6">
          Менеджеры компании с радостью ответят на ваши вопросы и произведут расчет стоимости услуг и подготовят индивидуальное коммерческое предложение.
        </p>
      </div>
      <div className="flex flex-col gap-[15px]">
        <Field id="name" label="Ваше имя:" required icon={<FaUser className="text-[15px]" />} />
        <Field id="phone" label="Телефон:" type="tel" required icon={<PhoneCall className="size-[17px]" />} />
        <Field id="email" label="E-mail:" type="email" icon={<FaEnvelope className="text-[17px]" />} />
        <Field id="product" label="Интересующий товар/услуга:" />
      </div>
      <div>
        <label htmlFor="message" className="block leading-6">
          Сообщение: <span className="ml-0.5 text-[#d22]">*</span>
        </label>
        <textarea id="message" className="mb-[15px] block h-[182px] w-full resize-none border border-[#d5dce0] bg-white p-3" />
        <label htmlFor="captcha" className="block leading-6">
          Введите код:<span className="ml-0.5 text-[#d22]">*</span>
        </label>
        <Captcha />
        <a href="#captcha" className="mt-[7px] mb-5 block leading-6 text-[#3a5fc8]">
          Поменять картинку
        </a>
        <input id="captcha" type="text" className="block h-[50px] w-full border-2 border-[#f2f2f2] bg-white px-3" />
        <div className="mt-[15px] flex justify-end">
          <button type="submit" className="h-[38px] rounded-[3px] bg-[#2e64dc] px-5 text-[13px] font-normal text-white shadow-[0_3px_6px_rgba(46,100,220,0.5)]">
            Отправить
          </button>
        </div>
      </div>
    </form>
  );
}

function Logo({ small }: { small?: boolean }) {
  return (
    <a href="#home" className={small ? "relative block w-fit text-white" : "relative block w-fit text-[#222]"}>
      <span className={small ? "block font-['Noto_Sans',sans-serif] text-[24px] leading-8 font-bold" : "block font-['Noto_Sans',sans-serif] text-[32px] leading-11 font-bold"}>
        VentPromKlimat
      </span>
      <svg viewBox="0 0 259 60" className={small ? "absolute -top-[7px] left-0 w-full text-[#777]" : "absolute -top-2 left-0 w-full text-[#3b68c8]"} fill="none" stroke="currentColor" strokeWidth="1.6">
        <path d="M112 18 C113 3 132 2 135 17M130 15l5 3 3 -6" />
        <path d="M83 43 C84 57 103 58 106 44M101 47l5 -4 3 6" />
      </svg>
    </a>
  );
}

function FooterHeading({ children }: { children: ReactNode }) {
  return <h3 className="mb-[21px] text-[17px] leading-6 font-extrabold text-white">{children}</h3>;
}

function FooterLinks({ items }: { items: string[] }) {
  return (
    <ul className="space-y-[15px] leading-4">
      {items.map((item) => (
        <li key={item}>
          <a href="#link" className="block">
            {item}
          </a>
        </li>
      ))}
    </ul>
  );
}

export default function App() {
  return (
    <div className="min-h-screen bg-white font-[Inter,sans-serif] text-[#222]">
      <div className="border-b border-[#eee]">
        <div className="mx-auto flex h-[41px] max-w-[1210px] items-center gap-8 px-2.5 text-[13px] text-[#666]">
          <span className="flex items-center gap-1">
            <MapPin className="size-[15px] text-[#4a68d8]" strokeWidth={1.5} />
            Волгоград, Ворошиловский район, ул. Череповецкая 77А
          </span>
          <span className="flex items-center gap-1">
            <Clock3 className="size-[15px] text-[#3f5fd0]" strokeWidth={2} />
            Пн – Пт: 08:00 – 17:00
          </span>
        </div>
      </div>

      <header className="relative z-10 shadow-[0_4px_14px_rgba(0,0,0,0.08)]">
        <div className="border-b border-[#eee] bg-white">
          <div className="mx-auto flex h-[110px] max-w-[1210px] items-center justify-between px-2.5">
            <div className="flex items-center">
              <Logo />
              <p className="ml-[7px] border-l border-[#3a64bd] pl-2.5 text-[11px] leading-[14px]">
                Производство воздуховодов
                <br />и фасонных изделий
              </p>
            </div>
            <div className="text-right">
              <a href="tel:+79950310231" className="block text-[20px] leading-6 text-black">
                тел.: +79950310231
              </a>
              <a href="mailto:ventpromklimat@mail.ru" className="block text-[15px] leading-[22px] font-light text-[#888]">
                ventpromklimat@mail.ru
              </a>
            </div>
          </div>
        </div>
        <div className="bg-white">
          <div className="mx-auto flex h-[50px] max-w-[1210px] items-center justify-between px-2.5">
            <nav className="-ml-[15px] flex h-full text-[15px]">
              {navItems.map((item) => (
                <a
                  key={item.title}
                  href="#nav"
                  className={item.active ? "flex items-center bg-[#f5f5f5] px-[15px]" : "flex items-center gap-1.5 px-[15px]"}
                >
                  {item.title}
                  {item.hasMenu && (
                    <svg viewBox="0 0 11 7" className="h-[7px] w-[11px]" fill="none" stroke="#333">
                      <path d="M.5 .8L5.5 5.8L10.5 .8" />
                    </svg>
                  )}
                </a>
              ))}
            </nav>
            <button type="button" aria-label="Поиск" className="flex size-[30px] items-center justify-center rounded-[3px] bg-[#f5f5f5] text-[#888]">
              <Search className="size-3.5" strokeWidth={1.5} />
            </button>
          </div>
        </div>
      </header>

      <div className="relative h-[150px] overflow-hidden bg-[#ebeff1]">
        <svg viewBox="0 0 1818 149" preserveAspectRatio="none" className="absolute inset-0 size-full">
          <path d="M0 0H382L357 110L323 149H0Z" fill="#e8ecee" />
          <path d="M0 0H380L362 70L280 50L150 0Z" fill="#e6e8ea" />
          <path d="M0 90L110 30L260 60L355 110L323 149H0Z" fill="#eaeef0" />
          <path d="M80 149L130 118L330 142L323 149Z" fill="#eff2f4" />
          <path d="M355 110L536 106L604 149H323Z" fill="#f3f6f8" />
          <path d="M400 0H562V27L536 106L355 110Z" fill="#edf0f2" />
          <path d="M562 27L650 0H1087L1222 83L947 50Z" fill="#f3f5f7" />
          <path d="M1087 0H1235L1225 83Z" fill="#eef2f3" />
          <path d="M947 50L1222 83L1230 149H903Z" fill="#f0f3f5" />
          <path d="M562 27L947 50L903 149H604L536 106Z" fill="#ebeff0" />
          <path d="M1235 0H1488L1375 149H1230L1225 83Z" fill="#ebeff0" />
          <path d="M1488 0L1375 149H1452Z" fill="#eff3f4" />
          <path d="M1490 0H1524L1679 77V149H1452Z" fill="#edf1f3" />
          <path d="M1524 0H1818V149L1679 77Z" fill="#e5e7e9" />
          <path d="M1679 77L1743 149H1679Z" fill="#f4f8f9" />
          <path d="M1680 78L1818 129V147Z" fill="#f4f8f9" />
          <path d="M1488 0H1494L1454 149H1450Z" fill="#f6f9fa" />
        </svg>
        <div className="relative mx-auto max-w-[1210px] px-2.5 pt-7">
          <h1 className="text-[36px] leading-10 font-extralight">Контакты</h1>
          <p className="mt-[15px] flex items-center text-[13px] leading-5">
            <a href="#home" className="text-[#999]">
              Главная
            </a>
            <ChevronRight className="mx-1.5 size-3 text-[#888]" strokeWidth={2} />
            Контакты
          </p>
        </div>
      </div>

      <main className="mx-auto flex max-w-[1210px] flex-col gap-10 pt-[50px] pb-[50px]">
        <Office address="400031, Волгоград, Ворошиловский район, ул. Череповецкая 77А">
          <MapFrame scale="30 м">
            <StreetMap />
          </MapFrame>
        </Office>
        <Office address="Волгоград, ул. Слесарная 103">
          <MapFrame scale="200 м" compact>
            <CityMap />
          </MapFrame>
        </Office>
        <QuestionForm />
      </main>

      <footer className="bg-[#0e0e0e] text-[13px] text-[#999]">
        <div className="mx-auto grid max-w-[1210px] grid-cols-[162px_220px_223px_303px_1fr] px-2.5 pt-14 pb-14">
          <div>
            <FooterHeading>Информация</FooterHeading>
            <FooterLinks items={infoLinks} />
            <div className="mt-[31px]">
              <FooterHeading>Скидки</FooterHeading>
              <FooterLinks items={["Акции"]} />
            </div>
          </div>
          <div className="pr-[30px]">
            <FooterHeading>
              <span className="whitespace-nowrap">Каталог товаров</span>
            </FooterHeading>
            <FooterLinks items={catalogLinks} />
          </div>
          <div className="pt-[45px]">
            <FooterLinks items={catalogLinksMore} />
          </div>
          <div className="pr-[50px]">
            <FooterHeading>Услуги</FooterHeading>
            <FooterLinks items={serviceLinks} />
          </div>
          <div>
            <FooterHeading>Контакты</FooterHeading>
            <a href="tel:+79950310231" className="block text-[20px] leading-6 text-white">
              тел.: +79950310231
            </a>
            <p className="mt-1 text-[11px] leading-4">консультация</p>
            <p className="mt-[39px] leading-6">
              E-mail:{" "}
              <a href="mailto:ventpromklimat@mail.ru" className="font-semibold text-white">
                ventpromklimat@mail.ru
              </a>
            </p>
            <div className="mt-[30px]">
              <FooterHeading>Адреса</FooterHeading>
              <p className="leading-[21px]">
                Волгоград, Ворошиловский район, ул. Череповецкая 77А <ExternalLink className="ml-0.5 inline size-3.5 text-[#777]" strokeWidth={1.5} />
              </p>
              <p className="mt-[7px] leading-[21px]">
                Волгоград, ул. Слесарная, 103 <ExternalLink className="ml-0.5 inline size-3.5 text-[#777]" strokeWidth={1.5} />
              </p>
            </div>
          </div>
        </div>
        <div className="border-t border-[#1f1f1f]">
          <div className="mx-auto grid max-w-[1210px] grid-cols-[300px_1fr] px-2.5 pt-[55px] pb-14">
            <div className="pt-[3px]">
              <Logo small />
              <p className="mt-[30px] text-[12px] leading-5">© 2003 - 2022 ООО «Спец-Сервис»</p>
            </div>
            <div className="space-y-5 text-[12px] leading-5">
              <p>
                Вентиляция Волгоград. Поставка, монтаж, проектирование систем вентиляции и кондиционирования воздуха, производство воздуховодов и фасонных изделий из оцинкованного металла и нержавейки.
              </p>
              <p>Вся информация, размещенная на сайте не является публичной офертой.</p>
            </div>
          </div>
        </div>
      </footer>

      <button type="button" className="fixed right-[70px] bottom-0 flex h-[41px] w-[200px] items-center rounded-t-[3px] bg-[#c4260a] pl-3.5 font-['Noto_Sans',sans-serif] text-[15px] text-white">
        <svg viewBox="0 0 32 26" className="h-[25px] w-[31px]" fill="none">
          <path d="M30 8v12q0 2-2 2v3l-4-3H8" stroke="#fff" strokeWidth="2" />
          <path d="M3 1h20q3 0 3 3v10q0 3-3 3H8l-4 4v-4H3q-3 0-3-3V4q0-3 3-3z" fill="#fff" />
          <circle cx="7" cy="9" r="1.7" fill="#c4260a" />
          <circle cx="13" cy="9" r="1.7" fill="#c4260a" />
          <circle cx="19" cy="9" r="1.7" fill="#c4260a" />
        </svg>
        <span className="ml-7">Я НА СВЯЗИ</span>
      </button>
    </div>
  );
}
